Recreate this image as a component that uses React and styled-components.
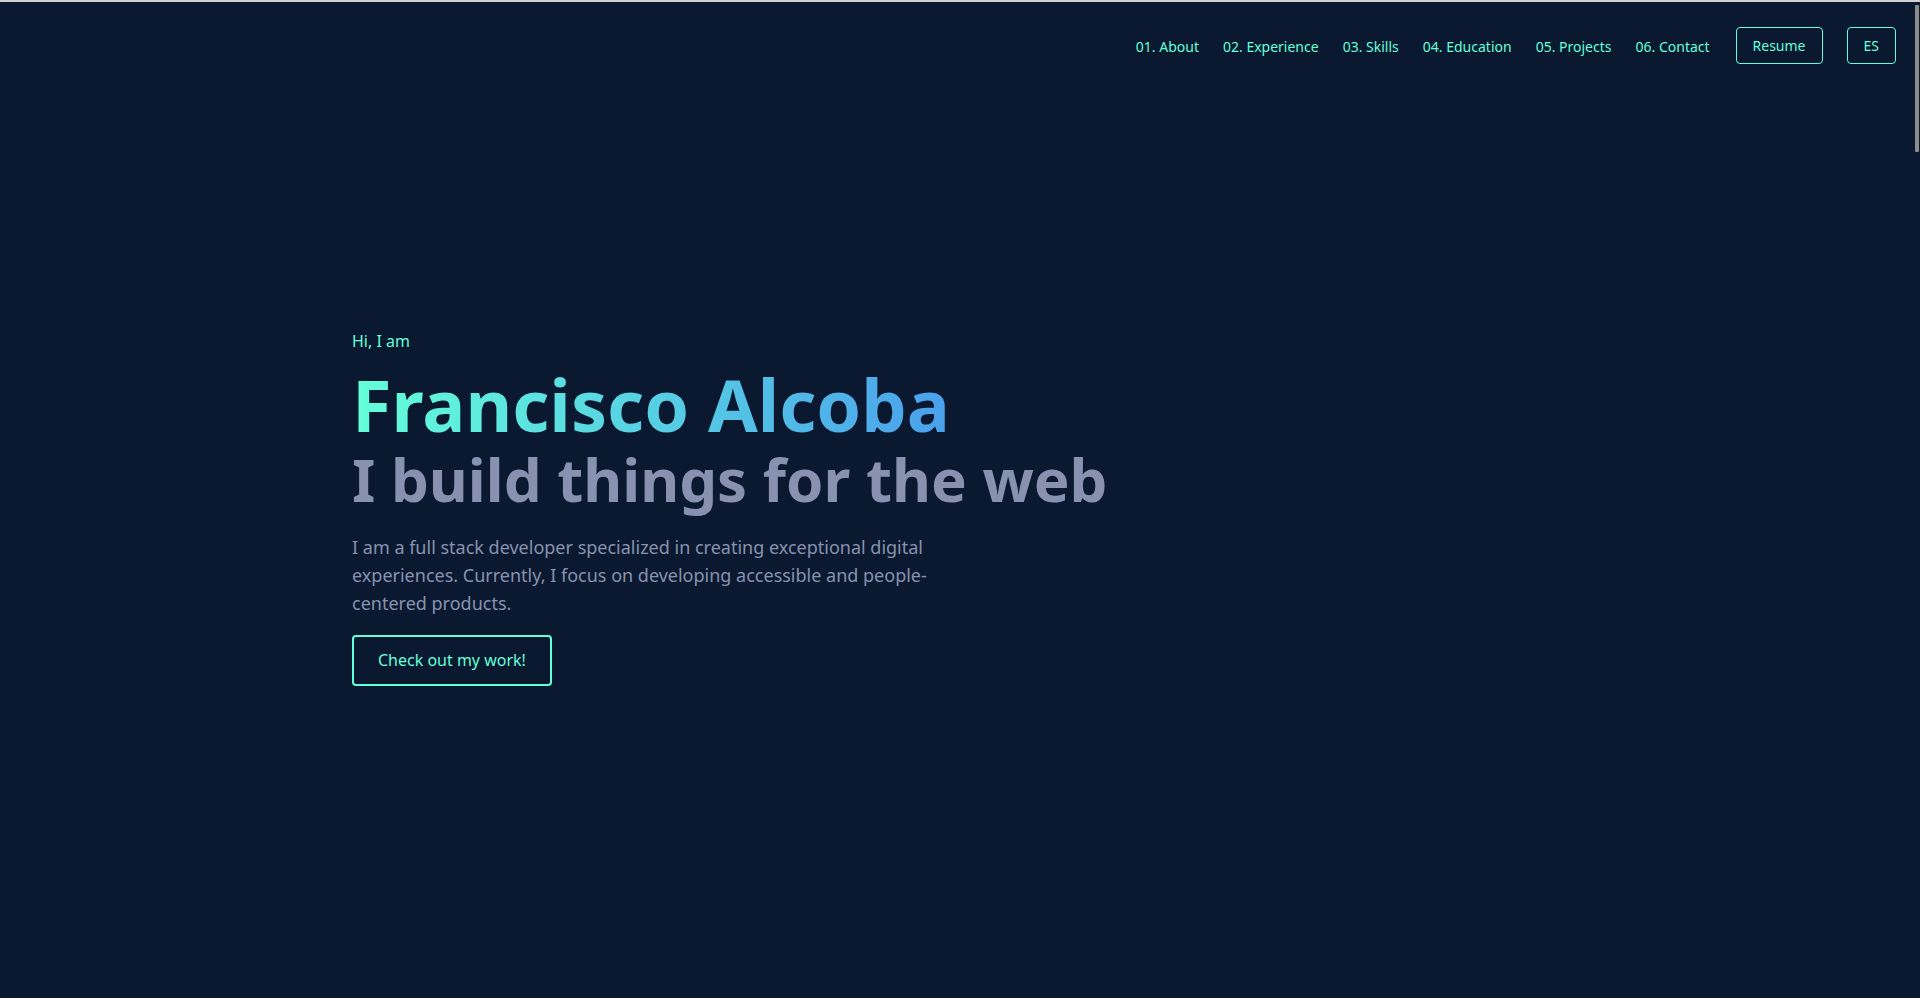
import React from "react";
import styled, { createGlobalStyle } from "styled-components";

const GlobalStyle = createGlobalStyle`
  *, *::before, *::after { box-sizing: border-box; }
  html, body { margin: 0; padding: 0; background: #0a192f; }
  body { font-family: "Noto Sans", "Open Sans", sans-serif; min-height: 100vh; }
`;

const Page = styled.div`
  min-height: 100vh;
  display: flex;
  flex-direction: column;
  background: #0a192f;
`;

const TopEdge = styled.div`
  height: 2px;
  flex: none;
  background: #d0d0d0;
`;

const ScrollThumb = styled.div`
  position: fixed;
  top: 5px;
  right: 1px;
  width: 4px;
  height: 147px;
  border-radius: 1px;
  background: #8c8c8c;
`;

const Header = styled.header`
  height: 87px;
  display: flex;
  align-items: center;
  justify-content: flex-end;
  padding: 0 24px;
`;

const NavList = styled.ol`
  list-style: none;
  margin: 0;
  padding: 0;
  display: flex;
  align-items: center;
  gap: 24px;
`;

const NavItem = styled.li`
  margin-left: ${(p) => (p.$spaced ? 2 : 0)}px;
`;

const NavLink = styled.a`
  color: #64ffda;
  font-size: 14px;
  line-height: 21px;
  text-decoration: none;
`;

const OutlineButton = styled.a`
  display: inline-block;
  color: #64ffda;
  font-size: 14px;
  line-height: 21px;
  padding: 7px 16px;
  border: 1px solid #64ffda;
  border-radius: 4px;
  text-decoration: none;
`;

const Hero = styled.section`
  width: 100%;
  max-width: 1216px;
  margin: 0 auto;
  padding-top: 240px;
  padding-bottom: 200px;
`;

const Greeting = styled.p`
  margin: 0;
  color: #64ffda;
  font-size: 16px;
  line-height: 24px;
`;

const Name = styled.h1`
  display: inline-block;
  margin: 12px 0 0;
  font-size: 72px;
  line-height: 79px;
  font-weight: 700;
  background: linear-gradient(90deg, #64ffda 0%, #4aa0ec 100%);
  -webkit-background-clip: text;
  background-clip: text;
  color: transparent;
`;

const Tagline = styled.h2`
  margin: 3px 0 0;
  font-size: 60px;
  line-height: 64px;
  font-weight: 700;
  color: #8892b0;
`;

const Intro = styled.p`
  margin: 22px 0 0;
  max-width: 600px;
  font-size: 18px;
  line-height: 28px;
  color: #8892b0;
`;

const CtaButton = styled.a`
  display: inline-block;
  margin-top: 18px;
  padding: 12px 24px 13px;
  border: 2px solid #64ffda;
  border-radius: 4px;
  color: #64ffda;
  font-size: 16px;
  line-height: 22px;
  text-decoration: none;
`;

const links = [
  ["01.", "About", "about"],
  ["02.", "Experience", "experience"],
  ["03.", "Skills", "skills"],
  ["04.", "Education", "education"],
  ["05.", "Projects", "projects"],
  ["06.", "Contact", "contact"],
];

export default function App() {
  return (
    <>
      <GlobalStyle />
      <Page>
        <TopEdge />
        <Header>
          <NavList>
            {links.map(([n, label, id]) => (
              <NavItem key={id}>
                <NavLink href={`#${id}`}>{n} {label}</NavLink>
              </NavItem>
            ))}
            <NavItem $spaced>
              <OutlineButton href="#resume">Resume</OutlineButton>
            </NavItem>
            <NavItem>
              <OutlineButton href="#lang">ES</OutlineButton>
            </NavItem>
          </NavList>
        </Header>
        <Hero>
          <Greeting>Hi, I am</Greeting>
          <div>
            <Name>Francisco Alcoba</Name>
          </div>
          <Tagline>I build things for the web</Tagline>
          <Intro>
            I am a full stack developer specialized in creating exceptional digital
            experiences. Currently, I focus on developing accessible and people-centered
            products.
          </Intro>
          <CtaButton href="#projects">Check out my work!</CtaButton>
        </Hero>
      </Page>
      <ScrollThumb />
    </>
  );
}
